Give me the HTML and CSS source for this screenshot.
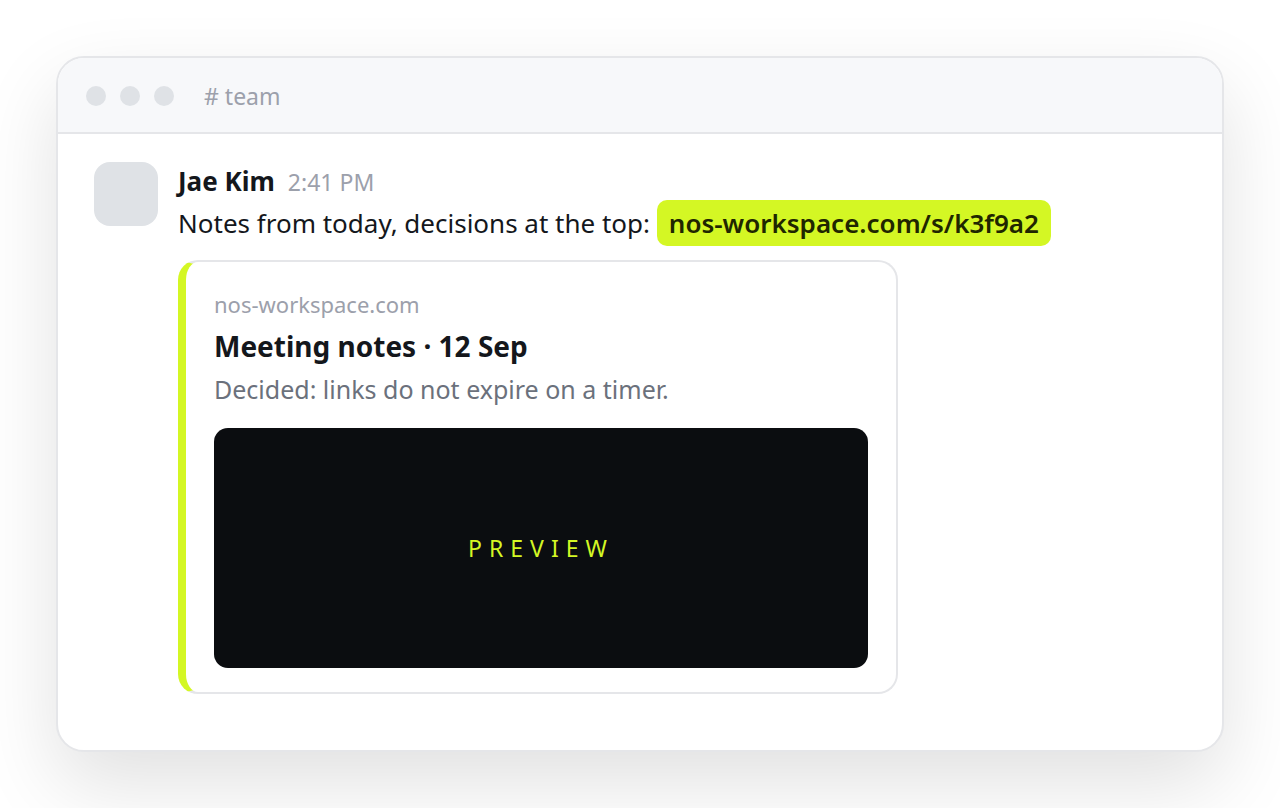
FILE: index.html
```html
<!DOCTYPE html>
<html lang="en">
  <head>
    <meta charset="utf-8" />
    <meta name="viewport" content="width=device-width, initial-scale=1" />
    <title># team</title>
    <link rel="stylesheet" href="styles.css">
  </head>
  <body>
    <main class="window">
      <header class="window-bar">
        <div class="dots">
          <span class="dot"></span>
          <span class="dot"></span>
          <span class="dot"></span>
        </div>
        <div class="channel"># team</div>
      </header>

      <article class="message">
        <div class="avatar"></div>
        <div class="message-body">
          <div class="message-meta">
            <span class="author">Jae Kim</span>
            <time class="time">2:41 PM</time>
          </div>
          <p class="message-text">
            Notes from today, decisions at the top:
            <a class="share-link" href="#unfurl">nos-workspace.com/s/k3f9a2</a>
          </p>

          <section class="unfurl" id="unfurl">
            <div class="unfurl-site">nos-workspace.com</div>
            <h1 class="unfurl-title">Meeting notes · 12 Sep</h1>
            <p class="unfurl-desc">Decided: links do not expire on a timer.</p>
            <div class="preview">PREVIEW</div>
          </section>
        </div>
      </article>
    </main>
  </body>
</html>
```

FILE: styles.css
```css
* {
  box-sizing: border-box;
}

body {
  margin: 0;
  padding: 56px;
  font-family: 'Segoe UI', 'Noto Sans', 'Open Sans', sans-serif;
  background: #fff;
  color: #14171c;
}

.window {
  background: #fff;
  border: 2px solid #e5e6e9;
  border-radius: 28px;
  overflow: hidden;
  box-shadow: 0 32px 80px rgba(0, 0, 0, 0.12);
}

.window-bar {
  display: flex;
  align-items: center;
  gap: 30px;
  padding: 19px 28px 17px;
  background: #f7f8fa;
  border-bottom: 2px solid #e5e6e9;
}

.dots {
  display: flex;
  gap: 14px;
}

.dot {
  width: 20px;
  height: 20px;
  border-radius: 50%;
  background: #dfe2e6;
}

.channel {
  font-size: 23px;
  line-height: 38px;
  color: #9ca0ab;
}

.message {
  display: flex;
  gap: 20px;
  padding: 28px 36px 56px;
}

.avatar {
  flex: none;
  width: 64px;
  height: 64px;
  border-radius: 16px;
  background: #dfe2e6;
}

.message-body {
  flex: 1;
  min-width: 0;
}

.message-meta {
  display: flex;
  align-items: baseline;
  gap: 13px;
  line-height: 38px;
}

.author {
  font-size: 26px;
  font-weight: 700;
}

.time {
  font-size: 23px;
  color: #9ca0ab;
}

.message-text {
  margin: 0;
  font-size: 26px;
  line-height: 44px;
}

.share-link {
  padding: 5px 12px;
  border-radius: 10px;
  background: #d4f724;
  color: #1f2600;
  font-weight: 600;
  text-decoration: none;
}

.unfurl {
  max-width: 720px;
  margin-top: 15px;
  padding: 24px 28px;
  border: 2px solid #e5e6e9;
  border-left: 8px solid #d4f724;
  border-radius: 20px;
}

.unfurl-site {
  font-size: 22px;
  line-height: 36px;
  color: #9ca0ab;
}

.unfurl-title {
  margin: 0;
  font-size: 28px;
  font-weight: 700;
  line-height: 48px;
}

.unfurl-desc {
  margin: 0 0 20px;
  font-size: 25px;
  line-height: 38px;
  color: #6b717c;
}

.preview {
  display: flex;
  align-items: center;
  justify-content: center;
  height: 240px;
  border-radius: 14px;
  background: #0b0d10;
  color: #d4f724;
  font-size: 23px;
  letter-spacing: 7px;
}
```
